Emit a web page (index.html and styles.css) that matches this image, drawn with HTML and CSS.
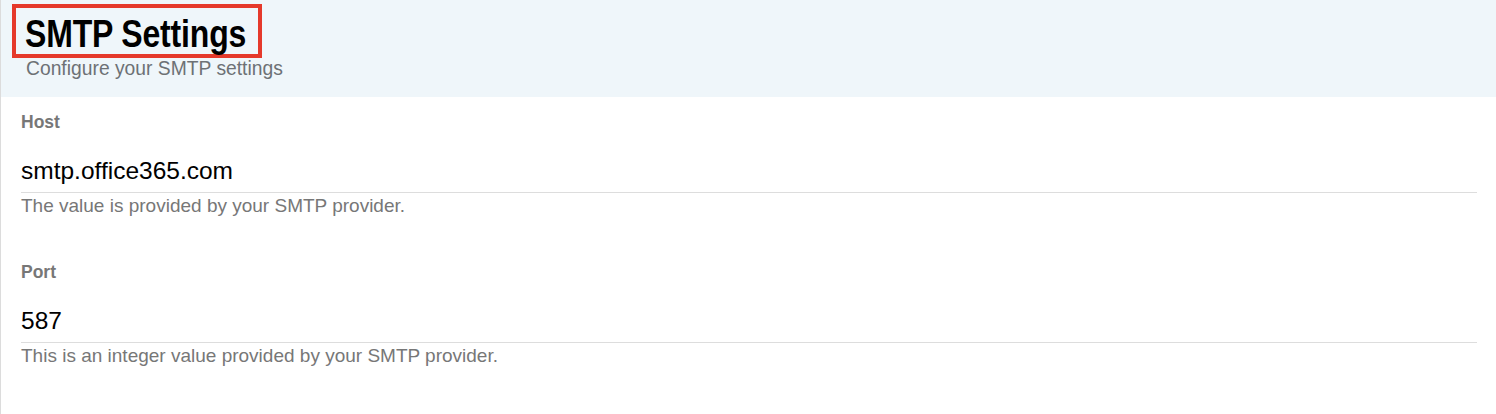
FILE: index.html
```html
<!DOCTYPE html>
<html lang="en">
<head>
  <meta charset="UTF-8" />
  <title>SMTP Settings</title>
  <link rel="stylesheet" href="styles.css">
</head>
<body>
  <div class="card">
    <!-- Header -->
    <div class="card-header">
      <h1 class="title"><span class="title-text">SMTP Settings</span></h1>
      <p class="subtitle">Configure your SMTP settings</p>
    </div>

    <!-- Fields -->
    <div class="fields">
      <div class="field">
        <label class="field-label">Host</label>
        <div class="field-value">smtp.office365.com</div>
        <p class="field-help">The value is provided by your SMTP provider.</p>
      </div>
      <div class="field">
        <label class="field-label">Port</label>
        <div class="field-value">587</div>
        <p class="field-help">This is an integer value provided by your SMTP provider.</p>
      </div>
    </div>
  </div>
</body>
</html>
```

FILE: styles.css
```css
/* Basic Reset */
* {
  margin: 0;
  padding: 0;
  box-sizing: border-box;
}

body {
  font-family: "Liberation Sans", Arial, sans-serif;
  background-color: #ffffff;
  color: #000;
}

.card {
  border-left: 1px solid #dcdcdc;
  border-top-right-radius: 4px;
  min-height: 414px;
}

/* Header */
.card-header {
  background-color: #eff6fa;
  padding: 4px 11px 17px;
}

.title {
  width: 250px;
  font-weight: bold;
  font-size: 39px;
  line-height: 40px;
  border: 4px solid #e5392b;
  padding: 6px 0 0 9px;
  white-space: nowrap;
}

/* no condensed face installed, so squeeze the bold one */
.title-text {
  display: inline-block;
  transform: scaleX(0.82);
  transform-origin: left center;
  letter-spacing: -0.2px;
}

.subtitle {
  font-size: 19.3px;
  line-height: 22px;
  color: #6d7175;
  margin-left: 14px;
}

/* Fields */
.fields {
  display: flex;
  flex-direction: column;
  gap: 45px;
  padding: 15px 19px 0 20px;
}

.field-label {
  display: block;
  font-size: 17.5px;
  line-height: 20px;
  font-weight: bold;
  color: #777;
}

.field-value {
  margin-top: 25px;
  font-size: 24.5px;
  line-height: 28px;
  padding-bottom: 7px;
  border-bottom: 1px solid #dddddd;
}

.field-help {
  margin-top: 2px;
  font-size: 19px;
  line-height: 22px;
  color: #777;
}
```
